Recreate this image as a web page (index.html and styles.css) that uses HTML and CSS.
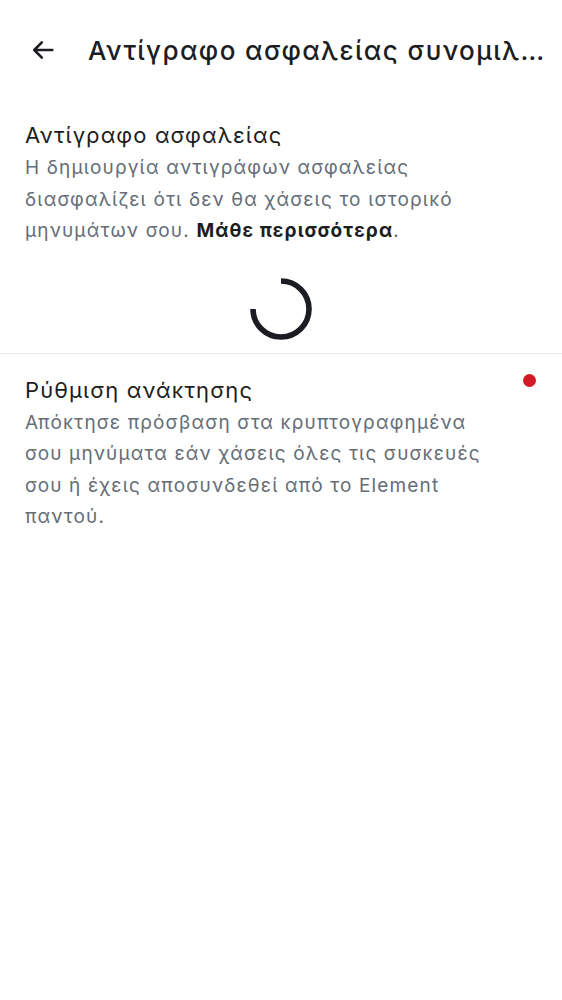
FILE: index.html
```html
<!DOCTYPE html>
<html lang="el">
<head>
<meta charset="utf-8">
<link rel="stylesheet" href="styles.css">
</head>
<body>
<header class="topbar">
  <button class="back" aria-label="Πίσω">
    <svg width="28" height="28" viewBox="0 0 24 24"><path d="M20 12H4.8M11 5.5 4.5 12l6.5 6.5" fill="none" stroke="#1b1d22" stroke-width="2.2" stroke-linecap="round" stroke-linejoin="round"/></svg>
  </button>
  <h1 class="title">Αντίγραφο ασφαλείας συνομιλιών</h1>
</header>
<section class="item">
  <div class="item-text">
    <h2 class="item-title">Αντίγραφο ασφαλείας</h2>
    <p class="item-desc">Η δημιουργία αντιγράφων ασφαλείας διασφαλίζει ότι δεν θα χάσεις το ιστορικό μηνυμάτων σου. <b class="link">Μάθε περισσότερα</b>.</p>
  </div>
</section>
<div class="spinner-wrap">
  <svg width="62" height="62" viewBox="0 0 62 62"><path d="M31 3 A28 28 0 1 1 3 31" fill="none" stroke="#1b1d22" stroke-width="5.6"/></svg>
</div>
<hr class="divider">
<section class="item item-row">
  <div class="item-text">
    <h2 class="item-title">Ρύθμιση ανάκτησης</h2>
    <p class="item-desc">Απόκτησε πρόσβαση στα κρυπτογραφημένα σου μηνύματα εάν χάσεις όλες τις συσκευές σου ή έχεις αποσυνδεθεί από το Element παντού.</p>
  </div>
  <span class="dot"></span>
</section>
</body>
</html>
```
FILE: styles.css
```css
* { box-sizing: border-box; }
html, body { margin: 0; padding: 0; background: #fff; }
body { font-family: Inter, "Noto Sans", sans-serif; color: #1b1d22; width: 562px; }
.topbar { display: flex; align-items: center; height: 100px; padding: 0 14px 0 29px; gap: 31px; }
.back { border: 0; background: none; padding: 0; width: 28px; height: 28px; display: flex; flex: none; }
.title { margin: 0; font-size: 26px; font-weight: 500; white-space: nowrap; overflow: hidden; text-overflow: ellipsis; flex: 1; min-width: 0; letter-spacing: 1.4px; }
.item { padding: 18px 25px 0; }
.item-text { width: 480px; }
.item-title { margin: 0; font-size: 22px; font-weight: 400; line-height: 34px; letter-spacing: 1.1px; }
.item-desc { margin: 0; font-size: 19px; line-height: 31.5px; color: #656d77; letter-spacing: 1.15px; }
.link { color: #1b1d22; font-weight: 700; letter-spacing: 1.1px; }
.spinner-wrap { display: flex; justify-content: center; padding: 31px 0 13px 0; }
.divider { border: 0; border-top: 1px solid #e7e7e9; margin: 0; }
.item-row { display: flex; align-items: flex-start; padding-top: 19px; }
.dot { width: 13px; height: 13px; border-radius: 50%; background: #d51928; margin-left: auto; margin-right: 1px; margin-top: 1px; }
```
